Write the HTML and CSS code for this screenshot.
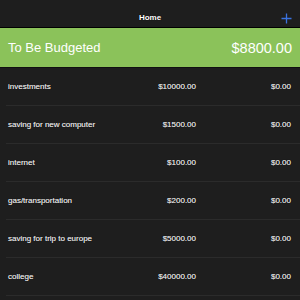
FILE: index.html
```html
<!DOCTYPE html>
<html>
<head>
<meta charset="utf-8">
<link rel="stylesheet" href="styles.css">
</head>
<body>
<div class="app">
  <header class="nav">
    <span class="title">Home</span>
    <svg class="plus" width="11" height="11" viewBox="0 0 11 11"><path d="M5.5 0.5V10.5M0.5 5.5H10.5" stroke="#3a72e0" stroke-width="1.3"/></svg>
  </header>
  <div class="budget">
    <span class="label">To Be Budgeted</span>
    <span class="total">$8800.00</span>
  </div>
  <ul class="list">
    <li class="row"><span class="name">investments</span><span class="amt">$10000.00</span><span class="act">$0.00</span></li>
    <li class="row"><span class="name">saving for new computer</span><span class="amt">$1500.00</span><span class="act">$0.00</span></li>
    <li class="row"><span class="name">internet</span><span class="amt">$100.00</span><span class="act">$0.00</span></li>
    <li class="row"><span class="name">gas/transportation</span><span class="amt">$200.00</span><span class="act">$0.00</span></li>
    <li class="row"><span class="name">saving for trip to europe</span><span class="amt">$5000.00</span><span class="act">$0.00</span></li>
    <li class="row"><span class="name">college</span><span class="amt">$40000.00</span><span class="act">$0.00</span></li>
  </ul>
</div>
</body>
</html>
```
FILE: styles.css
```css
html, body {
  margin: 0;
  padding: 0;
  background: #1e1e1e;
  font-family: "Liberation Sans", Arial, sans-serif;
  overflow: hidden;
}
.app {
  width: 300px;
  height: 300px;
  display: flex;
  flex-direction: column;
}
.nav {
  position: relative;
  height: 27px;
  display: flex;
  align-items: center;
  justify-content: center;
  background: #1e1e1e;
  border-bottom: 1px solid #000;
  box-sizing: content-box;
}
.title {
  color: #fff;
  font-size: 8px;
  font-weight: 700;
  margin-top: 8px;
  text-shadow: 0 0 1px #000;
}
.plus {
  position: absolute;
  right: 8px;
  top: 13px;
}
.budget {
  height: 39px;
  background: #8bc25a;
  border-bottom: 1px solid #111;
  display: flex;
  align-items: center;
  justify-content: space-between;
  padding: 0 8px;
  color: #fff;
}
.label {
  font-size: 13px;
}
.total {
  font-size: 14.5px;
}
.list {
  list-style: none;
  margin: 0;
  padding: 0 0 0 6px;
}
.row {
  height: 37px;
  border-bottom: 1px solid #2b2b2b;
  display: flex;
  align-items: center;
  padding-right: 9px;
  color: #ececec;
  font-size: 8px;
  text-shadow: 0 0 1px #000, 0 0 0.4px #ececec;
}
.name {
  flex: 1;
  padding-left: 2px;
}
.amt {
  width: 80px;
  text-align: right;
}
.act {
  width: 95px;
  text-align: right;
}
```
